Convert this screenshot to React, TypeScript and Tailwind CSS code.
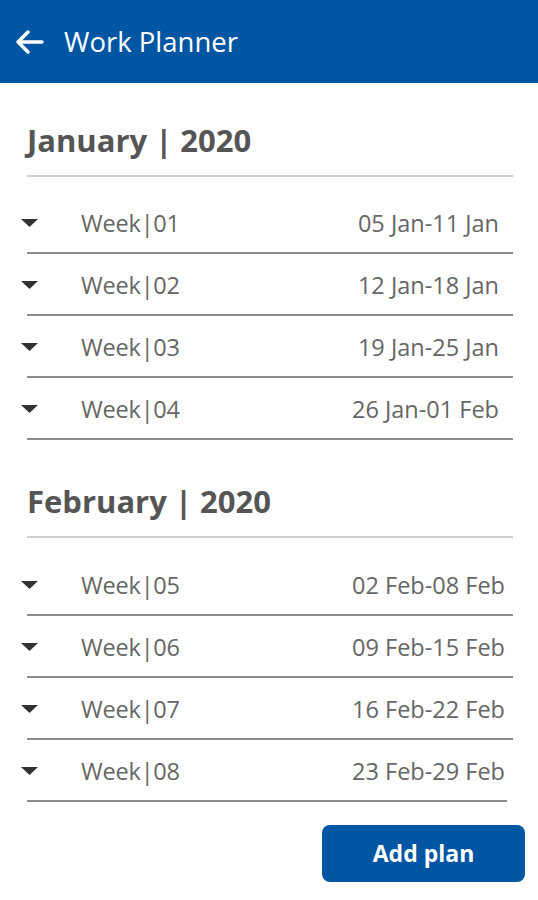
const january = [
  { week: "01", range: "05 Jan-11 Jan" },
  { week: "02", range: "12 Jan-18 Jan" },
  { week: "03", range: "19 Jan-25 Jan" },
  { week: "04", range: "26 Jan-01 Feb" },
];

const february = [
  { week: "05", range: "02 Feb-08 Feb" },
  { week: "06", range: "09 Feb-15 Feb" },
  { week: "07", range: "16 Feb-22 Feb" },
  { week: "08", range: "23 Feb-29 Feb" },
];

function Caret() {
  return (
    <svg width="17" height="8" viewBox="0 0 17 8" className="shrink-0">
      <path d="M0 0 L17 0 L8.5 8 Z" fill="#333333" />
    </svg>
  );
}

function WeekRow({
  week,
  range,
  firstGap,
  datePad,
  short,
}: {
  week: string;
  range: string;
  firstGap: string;
  datePad: string;
  short?: boolean;
}) {
  return (
    <div
      className={`flex h-[62px] items-start border-b-2 border-[#8c8c8c] ${firstGap} ${
        short ? "mr-[6px]" : ""
      }`}
    >
      <div className="flex w-full items-center pt-[17px]">
        <div className="-ml-[6px] w-[60px]">
          <Caret />
        </div>
        <span className="text-[23.5px] leading-[28px] tracking-[-0.2px] text-[#666666]">
          Week|{week}
        </span>
        <span
          className={`ml-auto text-[23.5px] leading-[28px] text-[#666666] ${
            short ? "pr-[2px]" : datePad
          }`}
        >
          {range}
        </span>
      </div>
    </div>
  );
}

function MonthSection({
  title,
  weeks,
  top,
  gap,
  datePad,
  shortLast,
}: {
  title: string;
  weeks: { week: string; range: string }[];
  top: string;
  gap: string;
  datePad: string;
  shortLast?: boolean;
}) {
  return (
    <section className={top}>
      <h2 className="text-[31px] font-bold leading-[36px] text-[#555555]">
        {title}
      </h2>
      <div className="mt-[17px] h-[2px] bg-[#cfcfcf]" />
      {weeks.map((w, i) => (
        <WeekRow
          key={w.week}
          week={w.week}
          range={w.range}
          firstGap={i === 0 ? gap : ""}
          short={shortLast && i === weeks.length - 1}
          datePad={datePad}
        />
      ))}
    </section>
  );
}

export default function App() {
  return (
    <div
      className="min-h-[900px] w-[538px] bg-white"
      style={{ fontFamily: '"Open Sans", "Noto Sans", sans-serif' }}
    >
      <header className="flex h-[83px] items-center bg-[#0156a4] pl-[14px] text-white">
        <svg width="30" height="26" viewBox="0 0 30 26" fill="none">
          <path
            d="M28 13 H4 M14 3 L4 13 L14 23"
            stroke="white"
            strokeWidth="3.5"
            strokeLinecap="round"
            strokeLinejoin="round"
          />
        </svg>
        <h1 className="ml-[20px] text-[27.5px] font-normal leading-none">
          Work Planner
        </h1>
      </header>

      <main className="pl-[27px] pr-[25px]">
        <MonthSection
          title="January | 2020"
          weeks={january}
          top="pt-[39px]"
          gap="mt-[15px]"
          datePad="pr-[14px]"
        />
        <MonthSection
          title="February | 2020"
          weeks={february}
          top="pt-[43px]"
          gap="mt-[16px]"
          datePad="pr-[8px]"
          shortLast
        />
        <div className="mt-[23px] flex justify-end">
          <button className="-mr-[12px] h-[57px] w-[203px] rounded-[8px] bg-[#0156a4] text-[23px] font-bold text-white">
            Add plan
          </button>
        </div>
      </main>
    </div>
  );
}
